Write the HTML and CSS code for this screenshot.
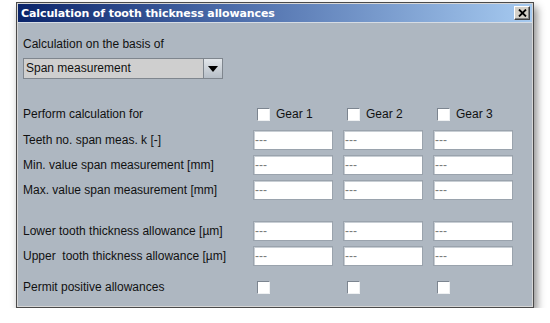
FILE: index.html
```html
<!DOCTYPE html>
<html lang="en">
<head>
    <meta charset="UTF-8">
    <title>Calculation of tooth thickness allowances</title>
    <link rel="stylesheet" href="styles.css">
</head>
<body>
    <div class="dialog">
        <div class="titlebar">
            <span class="title">Calculation of tooth thickness allowances</span>
            <button class="close-btn">
                <svg width="9" height="8" viewBox="0 0 9 8"><path d="M1 0.5 L8 7.5 M8 0.5 L1 7.5" stroke="#000" stroke-width="1.8"/></svg>
            </button>
        </div>
        <div class="content">
            <div class="row basis">Calculation on the basis of</div>
            <div class="combo">
                <span class="combo-text">Span measurement</span>
                <span class="combo-arrow">
                    <svg width="10" height="6" viewBox="0 0 10 6"><path d="M0 0 H10 L5 6 Z" fill="#000"/></svg>
                </span>
            </div>

            <div class="grid gears">
                <label class="label">Perform calculation for</label>
                <span class="gear"><span class="check"></span>Gear 1</span>
                <span class="gear"><span class="check"></span>Gear 2</span>
                <span class="gear"><span class="check"></span>Gear 3</span>
            </div>

            <div class="grid">
                <label class="label">Teeth no. span meas. k [-]</label>
                <input class="field" type="text" value="---">
                <input class="field" type="text" value="---">
                <input class="field" type="text" value="---">
            </div>
            <div class="grid">
                <label class="label">Min. value span measurement [mm]</label>
                <input class="field" type="text" value="---">
                <input class="field" type="text" value="---">
                <input class="field" type="text" value="---">
            </div>
            <div class="grid">
                <label class="label">Max. value span measurement [mm]</label>
                <input class="field" type="text" value="---">
                <input class="field" type="text" value="---">
                <input class="field" type="text" value="---">
            </div>

            <div class="grid spaced">
                <label class="label">Lower tooth thickness allowance [µm]</label>
                <input class="field" type="text" value="---">
                <input class="field" type="text" value="---">
                <input class="field" type="text" value="---">
            </div>
            <div class="grid">
                <label class="label">Upper&nbsp; tooth thickness allowance [µm]</label>
                <input class="field" type="text" value="---">
                <input class="field" type="text" value="---">
                <input class="field" type="text" value="---">
            </div>

            <div class="grid permit">
                <label class="label">Permit positive allowances</label>
                <span class="gear"><span class="check"></span></span>
                <span class="gear"><span class="check"></span></span>
                <span class="gear"><span class="check"></span></span>
            </div>
        </div>
    </div>
</body>
</html>
```

FILE: styles.css
```css
body {
    margin: 0;
    padding: 0;
    background: #fff;
    font-family: "Liberation Sans", Arial, sans-serif;
    font-size: 12px;
    color: #111;
}

.dialog {
    margin: 2px 0 0 16px;
    width: 514px;
    height: 304px;
    background: #aeb7c1;
    border: 1px solid #4a4a4a;
    box-shadow: inset 0 0 0 1px #d6d6d6, 3px 5px 8px rgba(0, 0, 0, 0.45);
    padding: 0 1px;
    box-sizing: content-box;
}

.titlebar {
    height: 18px;
    display: flex;
    align-items: center;
    justify-content: space-between;
    background: linear-gradient(to right, #0a246a 0%, #4a6aa8 40%, #a6caf0 100%);
    border-bottom: 1px solid #d6dce4;
    padding: 0 2px 0 3px;
    margin-top: 1px;
}

.title {
    color: #fff;
    font-weight: bold;
    font-size: 11px;
    font-family: "DejaVu Sans", Verdana, sans-serif;
    letter-spacing: -0.1px;
}

.close-btn {
    width: 16px;
    height: 14px;
    padding: 0;
    margin: 0;
    background: #d4d0c8;
    border: 1px solid;
    border-color: #fff #404040 #404040 #fff;
    box-shadow: inset -1px -1px 0 #808080;
    display: flex;
    align-items: center;
    justify-content: center;
}

.content {
    padding: 11px 0 0 5px;
}

.row {
    height: 20px;
    line-height: 20px;
}

.combo {
    margin-top: 4px;
    width: 198px;
    height: 19px;
    display: flex;
    border: 1px solid #7f868e;
    background: #cfcfcf;
}

.combo-text {
    flex: 1;
    line-height: 19px;
    padding-left: 2px;
}

.combo-arrow {
    width: 18px;
    border-left: 1px solid #7f868e;
    background: linear-gradient(to bottom, #e2e6ea, #b6bec7);
    display: flex;
    align-items: center;
    justify-content: center;
}

.grid {
    display: grid;
    grid-template-columns: 220px 80px 80px 80px;
    column-gap: 10px;
    align-items: center;
    height: 20px;
    margin-top: 5px;
}

.gears {
    margin-top: 25px;
    margin-bottom: 6px;
}

.spaced {
    margin-top: 21px;
}

.permit {
    margin-top: 11px;
}

.label {
    white-space: nowrap;
}

.gear {
    display: flex;
    align-items: center;
    padding-left: 4px;
}

.check {
    width: 11px;
    height: 11px;
    background: #fff;
    border: 1px solid;
    border-color: #7c8590 #eef0f2 #eef0f2 #7c8590;
    margin-right: 6px;
}

.field {
    width: 80px;
    height: 20px;
    box-sizing: border-box;
    border: 1px solid #9aa3ad;
    box-shadow: inset 1px 1px 0 #c8ced4;
    background: #fff;
    color: #7a7a7a;
    font-family: "Liberation Sans", Arial, sans-serif;
    font-size: 12px;
    padding: 0 1px;
    margin: 0;
    outline: none;
}
```
